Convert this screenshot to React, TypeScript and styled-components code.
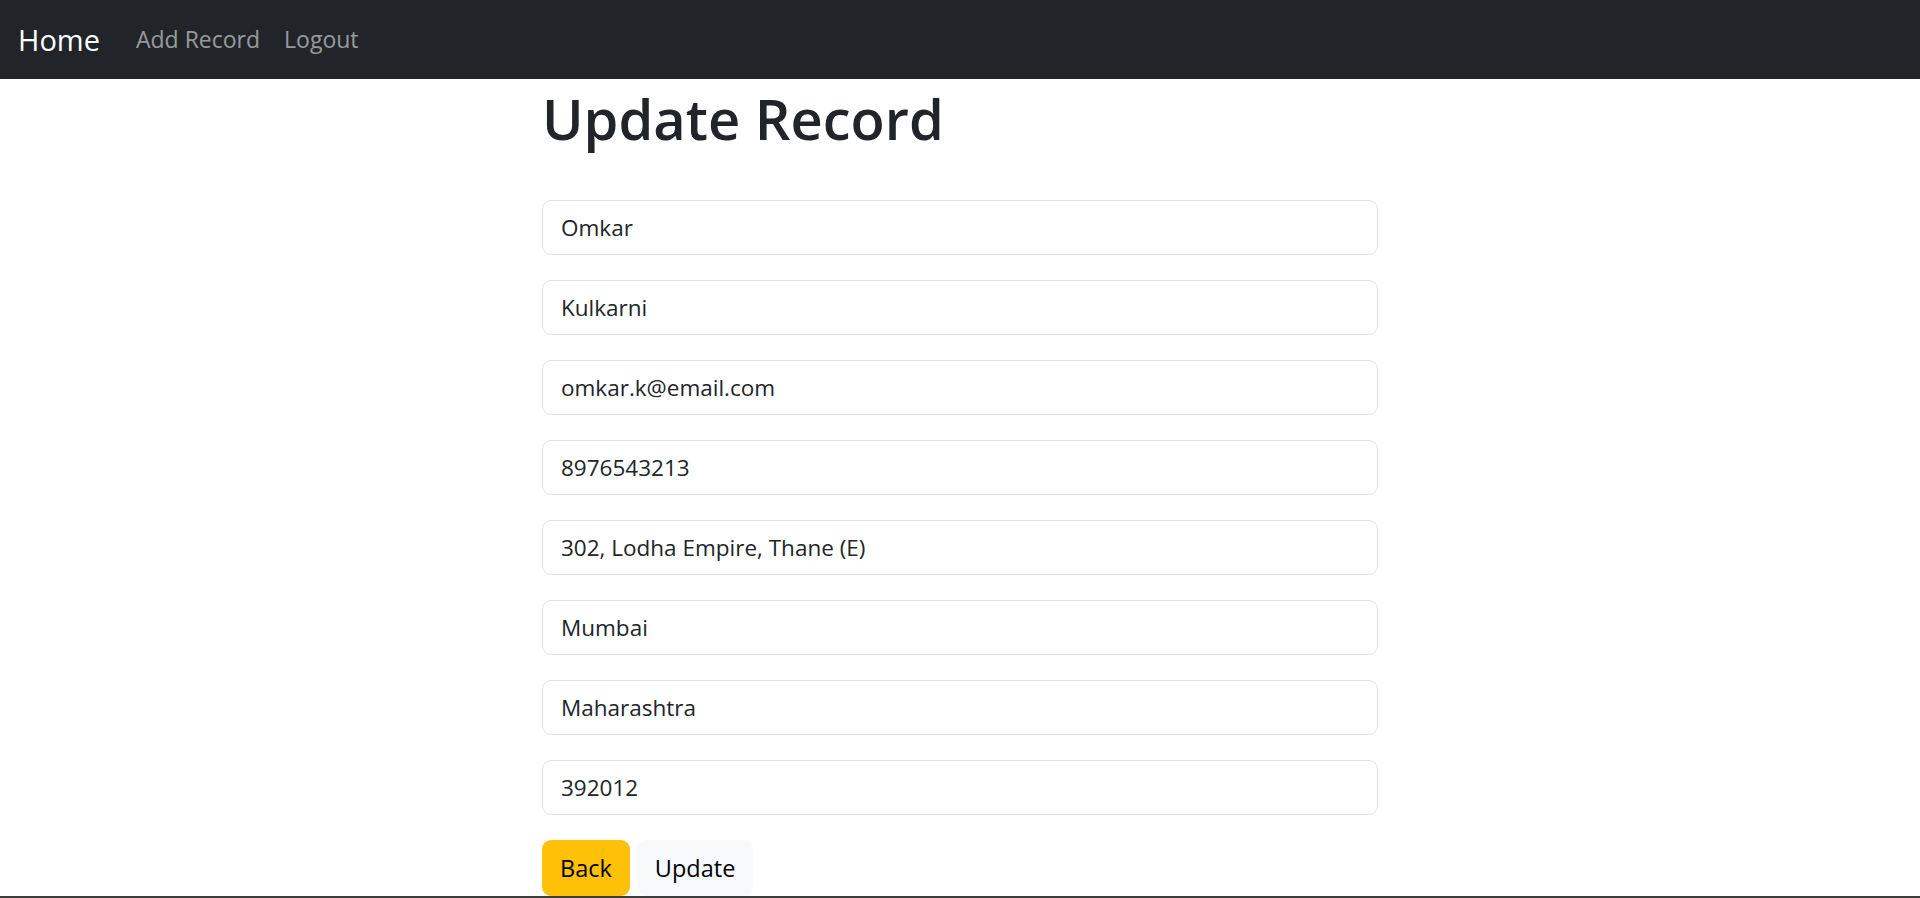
import React from "react";
import styled, { createGlobalStyle } from "styled-components";

const GlobalStyle = createGlobalStyle`
  html, body { margin: 0; padding: 0; background: #ffffff; }
  body {
    font-family: "Open Sans", "Noto Sans", "Liberation Sans", sans-serif;
    color: #212529;
    -webkit-font-smoothing: antialiased;
  }
  * { box-sizing: border-box; }
`;

const Page = styled.div`
  display: flex;
  flex-direction: column;
  min-height: 898px;
`;

const NavBar = styled.nav`
  height: 79px;
  background: #212529;
  display: flex;
  align-items: center;
  padding: 0 18px;
`;

const Brand = styled.a`
  font-size: 29px;
  color: #ffffff;
  text-decoration: none;
  margin-right: 24px;
  line-height: 1;
`;

const NavLink = styled.a`
  font-size: 23px;
  color: rgba(255, 255, 255, 0.55);
  text-decoration: none;
  padding: 0 12px;
  line-height: 1;
`;

const Main = styled.main`
  width: 836px;
  margin: 0 auto;
  display: flex;
  flex-direction: column;
`;

const Title = styled.h1`
  font-size: 56px;
  font-weight: 600;
  line-height: 72px;
  margin: 3px 0 46px;
  color: #212529;
`;

const Form = styled.form`
  display: flex;
  flex-direction: column;
  gap: 25px;
`;

const Input = styled.input`
  display: block;
  width: 100%;
  height: 55px;
  padding: 0 18px;
  font-family: inherit;
  font-size: 22.5px;
  color: #212529;
  background: #ffffff;
  border: 1.5px solid #dee2e6;
  border-radius: 9px;
  outline: none;
`;

const Actions = styled.div`
  display: flex;
  gap: 7px;
`;

const Button = styled.button<{ $variant: "warning" | "light" }>`
  height: 56px;
  padding: 0 18px;
  font-family: inherit;
  font-size: 23.5px;
  color: #000000;
  border: none;
  border-radius: 9px;
  background: ${(p) => (p.$variant === "warning" ? "#ffc107" : "#f8f9fa")};
  cursor: pointer;
`;

const BottomRule = styled.div`
  margin-top: auto;
  height: 2px;
  background: #3c3c3a;
`;

const values = [
  "Omkar",
  "Kulkarni",
  "omkar.k@email.com",
  "8976543213",
  "302, Lodha Empire, Thane (E)",
  "Mumbai",
  "Maharashtra",
  "392012",
];

export default function App() {
  return (
    <Page>
      <GlobalStyle />
      <NavBar>
        <Brand href="#">Home</Brand>
        <NavLink href="#">Add Record</NavLink>
        <NavLink href="#">Logout</NavLink>
      </NavBar>
      <Main>
        <Title>Update Record</Title>
        <Form onSubmit={(e) => e.preventDefault()}>
          {values.map((v, i) => (
            <Input key={i} defaultValue={v} />
          ))}
          <Actions>
            <Button type="button" $variant="warning">Back</Button>
            <Button type="submit" $variant="light">Update</Button>
          </Actions>
        </Form>
      </Main>
      <BottomRule />
    </Page>
  );
}
